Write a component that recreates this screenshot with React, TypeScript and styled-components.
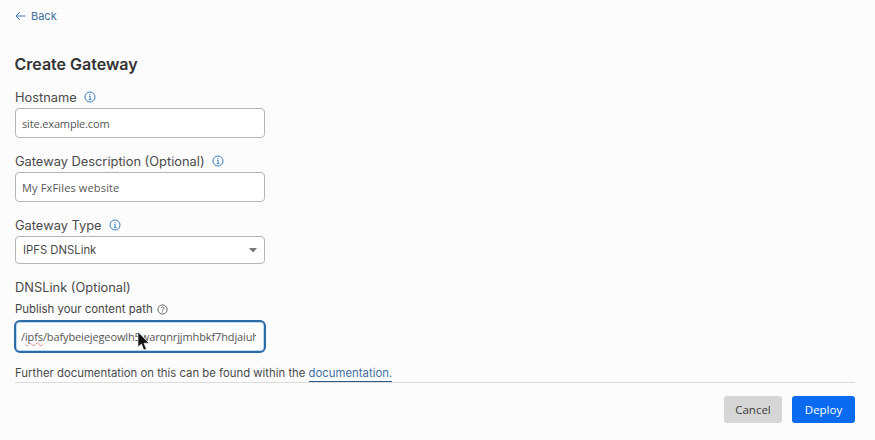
import React from "react";
import styled, { createGlobalStyle } from "styled-components";

const Global = createGlobalStyle`
  html, body { margin: 0; padding: 0; background: #fcfcfc; }
  body { font-family: Inter, "Liberation Sans", sans-serif; color: #3a3a3a; }
`;

const Page = styled.div`
  width: 875px;
  height: 440px;
  box-sizing: border-box;
  padding: 7px 20px 0 15px;
  overflow: hidden;
  display: flex;
  flex-direction: column;
`;

const BackLink = styled.a`
  display: flex;
  align-items: center;
  gap: 5px;
  height: 17px;
  font-size: 11px;
  color: #3f6f9f;
`;

const Title = styled.h1`
  margin: 30px 0 0 -0.5px;
  font-size: 16px;
  line-height: 20px;
  font-weight: 600;
  color: #333;
`;

const Field = styled.div<{ $top: number }>`
  margin-top: ${(p) => p.$top}px;
  display: flex;
  flex-direction: column;
`;

const Label = styled.label`
  display: flex;
  align-items: center;
  gap: 7px;
  height: 16px;
  font-size: 12.85px;
  color: #4a4a4a;
`;

const SubLabel = styled.div`
  display: flex;
  align-items: center;
  gap: 4px;
  height: 14px;
  margin-top: 7px;
  font-size: 11.4px;
  color: #454545;
`;

const TextBox = styled.div<{ $h?: number; $pad?: number; $track?: number }>`
  box-sizing: border-box;
  width: 250px;
  height: ${(p) => p.$h ?? 30}px;
  margin-top: 3px;
  padding: 0 7px 0 ${(p) => p.$pad ?? 6}px;
  display: flex;
  align-items: center;
  justify-content: space-between;
  background: #fff;
  border: 1px solid #b5b5b5;
  border-radius: 4px;
  font-family: "Open Sans", sans-serif;
  font-size: 11px;
  letter-spacing: ${(p) => p.$track ?? 0}px;
  color: #555;
`;

const SelectValue = styled.span`
  font-family: Inter, sans-serif;
  font-size: 11.3px;
  color: #4a4a4a;
`;

const FocusBox = styled.div`
  position: relative;
  box-sizing: border-box;
  width: 252px;
  height: 33px;
  margin-top: 4px;
  margin-left: -1px;
  padding: 0 8px 0 5px;
  display: flex;
  align-items: center;
  background: #fff;
  border: 2px solid #2b6ca8;
  border-radius: 6px;
  box-shadow: inset 0 0 0 1px #bcd9ef;
  font-family: "Open Sans", sans-serif;
  font-size: 11px;
  letter-spacing: -0.12px;
  color: #555;
`;

const PathText = styled.div`
  flex: 1;
  min-width: 0;
  line-height: 20px;
  white-space: nowrap;
  overflow: hidden;
`;

const Squiggle = styled.span`
  text-decoration: underline wavy #d88;
  text-decoration-thickness: 1px;
`;

const Pointer = styled.svg`
  position: absolute;
  left: 121px;
  top: 10px;
`;

const Note = styled.p`
  margin: 12px 0 0;
  font-size: 11.35px;
  line-height: 16px;
  color: #4a4a4a;
`;

const DocLink = styled.a`
  color: #3f6f9f;
  border-bottom: 1px solid #2a5a8c;
  padding-bottom: 1px;
`;

const Divider = styled.hr`
  margin: 1px 0 0;
  border: 0;
  border-top: 1px solid #dcdcdc;
`;

const Actions = styled.div`
  margin-top: 13px;
  display: flex;
  justify-content: flex-end;
  gap: 10px;
`;

const Button = styled.button<{ $primary?: boolean }>`
  height: 27px;
  width: ${(p) => (p.$primary ? 63 : 58)}px;
  padding: 0;
  border: 0;
  border-radius: 3px;
  font-family: "Open Sans", sans-serif;
  font-size: 11.5px;
  background: ${(p) => (p.$primary ? "#0a6bf0" : "#d6d6d6")};
  color: ${(p) => (p.$primary ? "#fff" : "#3a3a3a")};
`;

const Info = () => (
  <svg width="12" height="12" viewBox="0 0 12 12" fill="none" stroke="#3f80c0" strokeWidth="1">
    <circle cx="6" cy="6" r="5" />
    <path d="M5 5.2h1.1v3.2M4.7 8.6h2.8M6 3v.9" />
  </svg>
);

const Help = () => (
  <svg width="11" height="11" viewBox="0 0 12 12" fill="none" stroke="#555" strokeWidth="1">
    <circle cx="6" cy="6" r="5" />
    <path d="M4.5 4.7a1.5 1.5 0 1 1 2.3 1.3c-.5.3-.8.6-.8 1.1M6 8.2v.9" />
  </svg>
);

export default function App() {
  return (
    <Page>
      <Global />
      <BackLink>
        <svg width="11" height="10" viewBox="0 0 11 10" fill="none" stroke="#3f78b0" strokeWidth="1">
          <path d="M10.5 5H1M4.8 1.2 1 5l3.8 3.8" />
        </svg>
        Back
      </BackLink>
      <Title>Create Gateway</Title>
      <Field $top={15}>
        <Label>Hostname <Info /></Label>
        <TextBox $track={-0.15}>site.example.com</TextBox>
      </Field>
      <Field $top={15}>
        <Label>Gateway Description (Optional) <Info /></Label>
        <TextBox $track={0.15}>My FxFiles website</TextBox>
      </Field>
      <Field $top={15}>
        <Label>Gateway Type <Info /></Label>
        <TextBox $h={28} $pad={7}>
          <SelectValue>IPFS DNSLink</SelectValue>
          <svg width="8" height="5" viewBox="0 0 8 5"><path d="M0 0h8L4 4.5z" fill="#777" /></svg>
        </TextBox>
      </Field>
      <Field $top={15}>
        <Label>DNSLink (Optional)</Label>
        <SubLabel>Publish your content path <Help /></SubLabel>
        <FocusBox>
          <PathText>/<Squiggle>ipfs</Squiggle>/bafybeiejegeowlh5warqnrjjmhbkf7hdjaiuh</PathText>
          <Pointer width="13" height="20" viewBox="0 0 13 20">
            <path d="M1 0v15l3.4-3 2.4 6 2.6-1-2.5-5.8H12z" fill="#111" stroke="#fff" strokeWidth=".6" />
          </Pointer>
        </FocusBox>
      </Field>
      <Note>Further documentation on this can be found within the <DocLink>documentation.</DocLink></Note>
      <Divider />
      <Actions>
        <Button>Cancel</Button>
        <Button $primary>Deploy</Button>
      </Actions>
    </Page>
  );
}
